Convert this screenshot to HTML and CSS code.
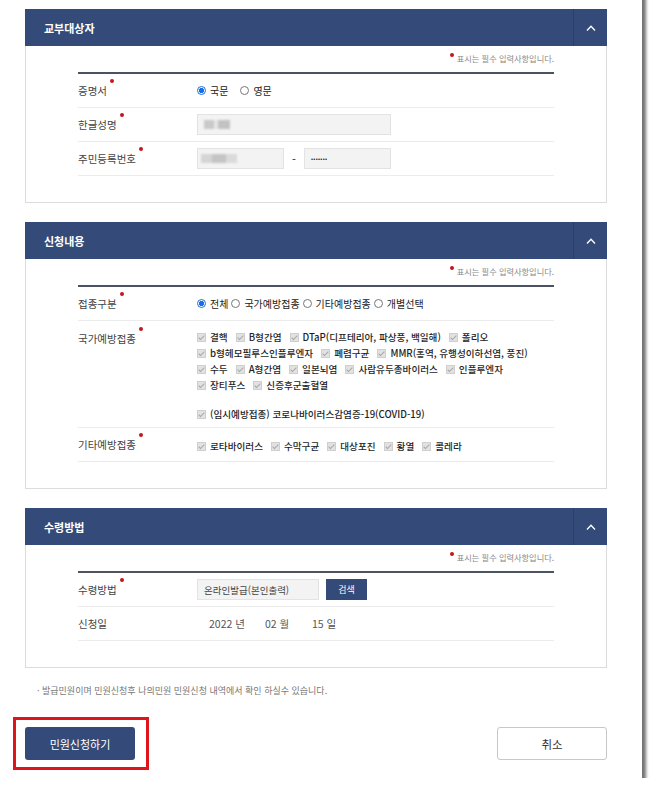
FILE: index.html
```html
<!DOCTYPE html>
<html lang="ko">
<head>
    <meta charset="UTF-8">
    <meta name="viewport" content="width=device-width, initial-scale=1.0">
    <title>민원신청</title>
    <link rel="stylesheet" href="styles.css">
</head>
<body>

<div class="window">
    <div class="page">

        <!-- 교부대상자 -->
        <section class="panel">
            <div class="panel-head">
                <h3>교부대상자</h3>
                <button type="button" class="toggle">
                    <svg width="10" height="6" viewBox="0 0 10 6"><polyline points="1,5.5 5,1.2 9,5.5" fill="none" stroke="#fff" stroke-width="1.3"/></svg>
                </button>
            </div>
            <div class="panel-body">
                <p class="req-note"><span class="req"></span>표시는 필수 입력사항입니다.</p>
                <div class="form-table">
                    <div class="row">
                        <div class="label">증명서<span class="req"></span></div>
                        <div class="field">
                            <label class="radio"><span class="radio-mark checked"></span>국문</label>
                            <label class="radio"><span class="radio-mark"></span>영문</label>
                        </div>
                    </div>
                    <div class="row">
                        <div class="label">한글성명<span class="req"></span></div>
                        <div class="field">
                            <div class="input wide"><span class="mask name"></span></div>
                        </div>
                    </div>
                    <div class="row">
                        <div class="label">주민등록번호<span class="req"></span></div>
                        <div class="field">
                            <div class="input half"><span class="mask jumin"></span></div>
                            <span class="dash">-</span>
                            <div class="input half"><span class="dots">•••••••</span></div>
                        </div>
                    </div>
                </div>
            </div>
        </section>

        <!-- 신청내용 -->
        <section class="panel">
            <div class="panel-head">
                <h3>신청내용</h3>
                <button type="button" class="toggle">
                    <svg width="10" height="6" viewBox="0 0 10 6"><polyline points="1,5.5 5,1.2 9,5.5" fill="none" stroke="#fff" stroke-width="1.3"/></svg>
                </button>
            </div>
            <div class="panel-body">
                <p class="req-note"><span class="req"></span>표시는 필수 입력사항입니다.</p>
                <div class="form-table">
                    <div class="row">
                        <div class="label">접종구분<span class="req"></span></div>
                        <div class="field tight">
                            <label class="radio"><span class="radio-mark checked"></span>전체</label>
                            <label class="radio"><span class="radio-mark"></span>국가예방접종</label>
                            <label class="radio"><span class="radio-mark"></span>기타예방접종</label>
                            <label class="radio"><span class="radio-mark"></span>개별선택</label>
                        </div>
                    </div>
                    <div class="row top">
                        <div class="label">국가예방접종<span class="req"></span></div>
                        <div class="field options">
                            <div class="opt-line">
                                <label class="check"><span class="cb"></span>결핵</label>
                                <label class="check"><span class="cb"></span>B형간염</label>
                                <label class="check"><span class="cb"></span>DTaP(디프테리아, 파상풍, 백일해)</label>
                                <label class="check"><span class="cb"></span>폴리오</label>
                            </div>
                            <div class="opt-line">
                                <label class="check"><span class="cb"></span>b형헤모필루스인플루엔자</label>
                                <label class="check"><span class="cb"></span>폐렴구균</label>
                                <label class="check"><span class="cb"></span>MMR(홍역, 유행성이하선염, 풍진)</label>
                            </div>
                            <div class="opt-line">
                                <label class="check"><span class="cb"></span>수두</label>
                                <label class="check"><span class="cb"></span>A형간염</label>
                                <label class="check"><span class="cb"></span>일본뇌염</label>
                                <label class="check"><span class="cb"></span>사람유두종바이러스</label>
                                <label class="check"><span class="cb"></span>인플루엔자</label>
                            </div>
                            <div class="opt-line">
                                <label class="check"><span class="cb"></span>장티푸스</label>
                                <label class="check"><span class="cb"></span>신증후군출혈열</label>
                            </div>
                            <div class="opt-line extra">
                                <label class="check"><span class="cb"></span>(임시예방접종) 코로나바이러스감염증-19(COVID-19)</label>
                            </div>
                        </div>
                    </div>
                    <div class="row">
                        <div class="label">기타예방접종<span class="req"></span></div>
                        <div class="field options">
                            <div class="opt-line">
                                <label class="check"><span class="cb"></span>로타바이러스</label>
                                <label class="check"><span class="cb"></span>수막구균</label>
                                <label class="check"><span class="cb"></span>대상포진</label>
                                <label class="check"><span class="cb"></span>황열</label>
                                <label class="check"><span class="cb"></span>콜레라</label>
                            </div>
                        </div>
                    </div>
                </div>
            </div>
        </section>

        <!-- 수령방법 -->
        <section class="panel">
            <div class="panel-head">
                <h3>수령방법</h3>
                <button type="button" class="toggle">
                    <svg width="10" height="6" viewBox="0 0 10 6"><polyline points="1,5.5 5,1.2 9,5.5" fill="none" stroke="#fff" stroke-width="1.3"/></svg>
                </button>
            </div>
            <div class="panel-body">
                <p class="req-note"><span class="req"></span>표시는 필수 입력사항입니다.</p>
                <div class="form-table">
                    <div class="row">
                        <div class="label">수령방법<span class="req"></span></div>
                        <div class="field">
                            <div class="input method">온라인발급(본인출력)</div>
                            <button type="button" class="btn-search">검색</button>
                        </div>
                    </div>
                    <div class="row">
                        <div class="label">신청일</div>
                        <div class="field date">
                            <span class="date-y">2022 년</span>
                            <span class="date-m">02 월</span>
                            <span>15 일</span>
                        </div>
                    </div>
                </div>
            </div>
        </section>

        <p class="foot-note">· 발급민원이며 민원신청후 나의민원 민원신청 내역에서 확인 하실수 있습니다.</p>

        <div class="actions">
            <div class="highlight">
                <button type="button" class="btn-primary">민원신청하기</button>
            </div>
            <button type="button" class="btn-cancel">취소</button>
        </div>

    </div>
</div>

</body>
</html>
```

FILE: styles.css
```css
/* Base */
* {
    box-sizing: border-box;
}
body {
    margin: 0;
    background-color: #ffffff;
    font-family: "Noto Sans CJK KR", "Noto Sans", sans-serif;
    color: #333;
    overflow: hidden;
}
button {
    font-family: inherit;
    cursor: pointer;
}

/* Window frame with shadow */
.window {
    width: 642px;
    height: 788px;
    margin-top: -10px;
    padding-top: 19px;
    background-color: #ffffff;
    box-shadow: 4px 4px 3px rgba(0, 0, 0, 0.55);
}
.page {
    width: 582px;
    margin-left: 25px;
}

/* Panels */
.panel + .panel {
    margin-top: 19px;
}
.panel-head {
    height: 37px;
    background-color: #344a78;
    display: flex;
    align-items: center;
    justify-content: space-between;
}
.panel-head h3 {
    margin: 0;
    padding-left: 19px;
    font-size: 11px;
    font-weight: 700;
    color: #fff;
}
.toggle {
    width: 34px;
    height: 100%;
    padding: 0;
    border: none;
    border-left: 1px solid #2c3f67;
    background: transparent;
    display: flex;
    align-items: center;
    justify-content: center;
}
.panel-body {
    border: 1px solid #dcdcdc;
    border-top: none;
    padding: 0 52px 26px;
}
.req-note {
    margin: 0;
    padding: 6px 0 8px;
    text-align: right;
    font-size: 8.2px;
    line-height: 12px;
    color: #888;
}
.req {
    display: inline-block;
    position: relative;
    top: 1px;
    width: 4px;
    height: 4px;
    border-radius: 50%;
    background-color: #c4161c;
    vertical-align: top;
    margin: 0 3px 0 2px;
}
.label .req {
    top: -4px;
    margin: 0 0 0 3px;
}

/* Form rows */
.form-table {
    border-top: 2px solid #4b5263;
}
.row {
    display: flex;
    align-items: center;
    min-height: 34px;
    border-bottom: 1px solid #ececec;
}
.row.top {
    align-items: flex-start;
}
.row.top .label {
    padding-top: 10px;
}
.label {
    width: 119px;
    font-size: 10.5px;
    color: #444;
}
.field {
    display: flex;
    align-items: center;
    font-size: 10px;
    color: #222;
}

/* Radios */
.radio {
    display: inline-flex;
    align-items: center;
    margin-right: 12px;
}
.tight .radio {
    margin-right: 3px;
}
.radio-mark {
    width: 9px;
    height: 9px;
    border: 1px solid #777;
    border-radius: 50%;
    margin-right: 4px;
    background: #fff;
}
.radio-mark.checked {
    border-color: #1a6fe0;
    background: radial-gradient(circle, #1a6fe0 0 2.4px, #fff 2.9px);
}

/* Inputs */
.input {
    height: 21px;
    background-color: #f3f3f3;
    border: 1px solid #e3e3e3;
    display: flex;
    align-items: center;
    padding-left: 6px;
    font-size: 9.5px;
    color: #444;
}
.input.wide {
    width: 194px;
}
.input.half {
    width: 87px;
}
.input.method {
    width: 122px;
}
.dash {
    width: 20px;
    text-align: center;
    font-size: 11px;
}
.mask {
    display: inline-block;
    height: 9px;
    filter: blur(1px);
}
.mask.name {
    width: 26px;
    background: linear-gradient(90deg, #c9c9c9 0 40%, #e6e6e6 40% 55%, #c2c2c2 55%);
}
.mask.jumin {
    width: 36px;
    margin-left: -3px;
    background: linear-gradient(90deg, #d5d5d5 0 30%, #c4c4c4 30% 70%, #dadada 70%);
}
.dots {
    font-size: 6px;
    letter-spacing: 0.3px;
    color: #222;
}
.btn-search {
    width: 41px;
    height: 21px;
    margin-left: 7px;
    padding: 0;
    border: none;
    background-color: #344a78;
    color: #fff;
    font-size: 9px;
}

/* Checkboxes */
.options {
    display: block;
    padding: 8px 0 5px;
    font-size: 9.6px;
    font-weight: 500;
    color: #1e1e1e;
}
.opt-line {
    display: flex;
    white-space: nowrap;
    line-height: 16px;
}
.opt-line.extra {
    margin-top: 13px;
}
.check {
    display: inline-flex;
    align-items: center;
    margin-right: 8px;
}
.cb {
    position: relative;
    width: 9px;
    height: 9px;
    margin-right: 4px;
    background-color: #e2e2e2;
    border: 1px solid #cfcfcf;
}
.cb::after {
    content: "";
    position: absolute;
    left: 2px;
    top: 0;
    width: 2px;
    height: 5px;
    border-right: 1px solid #a8a8a8;
    border-bottom: 1px solid #a8a8a8;
    transform: rotate(45deg);
}

/* Date */
.date {
    padding-left: 12px;
    font-size: 10.5px;
    color: #555;
}
.date-y {
    width: 56px;
}
.date-m {
    width: 47px;
}

/* Footer */
.foot-note {
    margin: 17px 0 0 12px;
    font-size: 9px;
    line-height: 12px;
    color: #777;
}
.actions {
    margin-top: 20px;
    display: flex;
    justify-content: space-between;
    align-items: center;
}
.highlight {
    margin-left: -12px;
    padding: 7px 11px 7px 9px;
    border: 3px solid #e0141c;
}
.btn-primary,
.btn-cancel {
    width: 110px;
    height: 33px;
    border-radius: 3px;
    font-size: 11px;
}
.btn-primary {
    border: none;
    background-color: #344a78;
    color: #fff;
}
.btn-cancel {
    border: 1px solid #c8c8c8;
    background-color: #fff;
    color: #333;
    font-size: 11.5px;
}
```
